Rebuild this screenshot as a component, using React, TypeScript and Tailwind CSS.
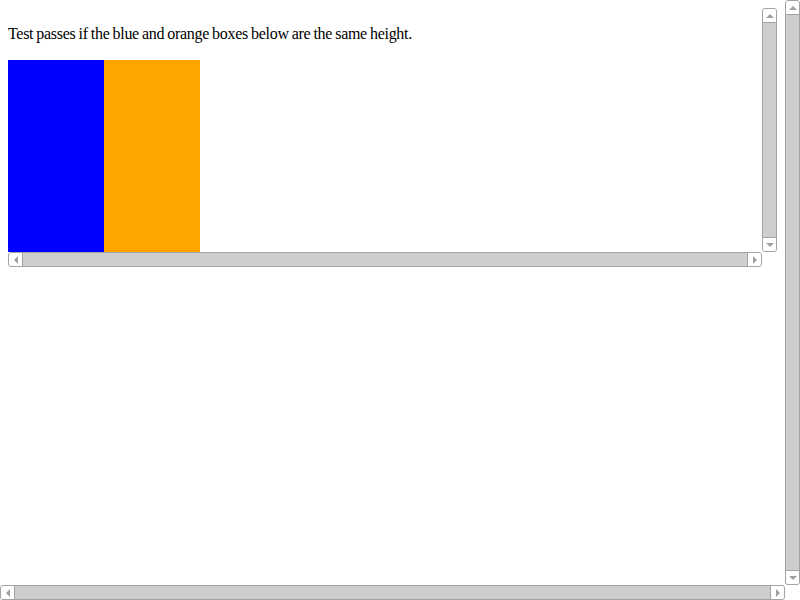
import React from "react";

const Up = () => (
  <div className="w-0 h-0 border-x-[4px] border-x-transparent border-b-[4px] border-b-[#a0a0a0]" />
);
const Down = () => (
  <div className="w-0 h-0 border-x-[4px] border-x-transparent border-t-[4px] border-t-[#a0a0a0]" />
);
const Left = () => (
  <div className="w-0 h-0 border-y-[4px] border-y-transparent border-r-[4px] border-r-[#a0a0a0]" />
);
const Right = () => (
  <div className="w-0 h-0 border-y-[4px] border-y-transparent border-l-[4px] border-l-[#a0a0a0]" />
);

function VScroll() {
  return (
    <div className="w-[15px] shrink-0 flex flex-col border border-[#a3a3a3] rounded-[3px] overflow-hidden bg-[#cecece]">
      <div className="h-[14px] shrink-0 bg-white border-b border-[#a3a3a3] flex items-center justify-center">
        <Up />
      </div>
      <div className="flex-1" />
      <div className="h-[14px] shrink-0 bg-white border-t border-[#a3a3a3] flex items-center justify-center">
        <Down />
      </div>
    </div>
  );
}

function HScroll() {
  return (
    <div className="h-[15px] flex-1 flex border border-[#a3a3a3] rounded-[3px] overflow-hidden bg-[#cecece]">
      <div className="w-[14px] shrink-0 bg-white border-r border-[#a3a3a3] flex items-center justify-center">
        <Left />
      </div>
      <div className="flex-1" />
      <div className="w-[14px] shrink-0 bg-white border-l border-[#a3a3a3] flex items-center justify-center">
        <Right />
      </div>
    </div>
  );
}

export default function App() {
  return (
    <div className="w-[800px] h-[600px] flex flex-col bg-white overflow-hidden font-['Liberation_Serif',serif] text-[16px] text-black">
      <div className="flex flex-1 min-h-0">
        <div className="flex-1 p-2">
          <div className="w-[769px] h-[259px] flex flex-col">
            <div className="flex flex-1 min-h-0">
              <div className="flex-1 overflow-hidden">
                <p className="mt-4 mb-4 leading-[20px] whitespace-nowrap tracking-[-0.3px] [word-spacing:-0.6px]">
                  Test passes if the blue and orange boxes below are the same height.
                </p>
                <div className="flex">
                  <div className="w-24 h-48 bg-[#0000ff]" />
                  <div className="w-24 h-48 bg-[#ffa500]" />
                </div>
              </div>
              <VScroll />
            </div>
            <div className="flex h-[15px]">
              <HScroll />
              <div className="w-[15px] shrink-0" />
            </div>
          </div>
        </div>
        <VScroll />
      </div>
      <div className="flex h-[15px] shrink-0">
        <HScroll />
        <div className="w-[15px] shrink-0" />
      </div>
    </div>
  );
}
